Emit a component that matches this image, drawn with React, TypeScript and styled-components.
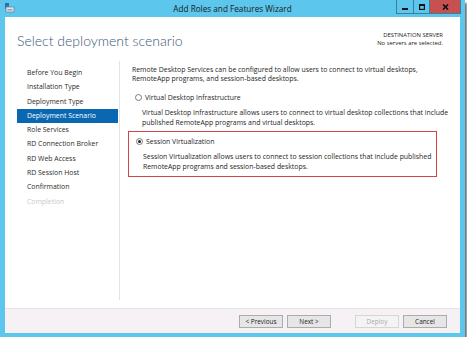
import React from "react";
import styled, { createGlobalStyle } from "styled-components";

const Global = createGlobalStyle`
  html, body { margin: 0; padding: 0; background: #ffffff; }
  body { font-family: "Open Sans", "Noto Sans", sans-serif; }
  * { box-sizing: border-box; }
`;

const Window = styled.div`
  width: 465px;
  height: 337px;
  background: #5cc6ec;
  padding: 0 5px 4px 5px;
  display: flex;
  flex-direction: column;
  box-shadow: 2px 3px 2px rgba(0, 0, 0, 0.55);
`;

const TitleBar = styled.div`
  height: 17px;
  position: relative;
  display: flex;
  align-items: center;
  justify-content: center;
  font-size: 8.2px;
  color: #1a1a1a;
`;

const AppIcon = styled.div`
  position: absolute;
  left: 0;
  top: 3px;
  width: 10px;
  height: 10px;
`;

const Controls = styled.div`
  position: absolute;
  right: -1px;
  top: 0;
  display: flex;
  height: 14px;
  border: 1px solid #3a7f9c;
  border-top: none;
`;

const Ctrl = styled.div<{ $w: number; $red?: boolean }>`
  width: ${(p) => p.$w}px;
  height: 100%;
  display: flex;
  align-items: center;
  justify-content: center;
  background: ${(p) => (p.$red ? "#c75050" : "#5cc6ec")};
  border-left: 1px solid #3a7f9c;
  &:first-child { border-left: none; }
`;

const Body = styled.div`
  flex: 1;
  background: #ffffff;
  display: flex;
  flex-direction: column;
`;

const Header = styled.div`
  height: 44px;
  display: flex;
  align-items: flex-start;
  justify-content: space-between;
  padding: 14px 17px 0 12px;
`;

const Heading = styled.h1`
  margin: 0;
  font-family: "Lato", "Open Sans", sans-serif;
  font-weight: 300;
  font-size: 14px;
  line-height: 20px;
  color: #3b5775;
`;

const Dest = styled.div`
  text-align: right;
  font-size: 5.9px;
  line-height: 8px;
  color: #222;
`;

const Main = styled.div`
  flex: 1;
  display: flex;
`;

const Nav = styled.ul`
  list-style: none;
  margin: 0;
  padding: 5px 0 0 12px;
  width: 115px;
  border-right: 1px solid #e3e3e3;
  margin-bottom: 8px;
`;

const NavItem = styled.li<{ $active?: boolean; $disabled?: boolean }>`
  height: 14.3px;
  line-height: 14.3px;
  padding-left: 10px;
  width: 101px;
  font-size: 6.9px;
  white-space: nowrap;
  color: ${(p) => (p.$active ? "#ffffff" : p.$disabled ? "#c9c9c9" : "#2a2a2a")};
  background: ${(p) => (p.$active ? "#0a67b1" : "transparent")};
`;

const Content = styled.div`
  flex: 1;
  padding: 4px 0 0 12px;
  font-size: 6.9px;
  color: #1e1e1e;
  white-space: nowrap;
`;

const Para = styled.p`
  margin: 0;
  line-height: 9.4px;
`;

const Option = styled.div<{ $selected?: boolean }>`
  margin: ${(p) => (p.$selected ? "3px 0 0 -4px" : "9px 0 0 0")};
  padding: ${(p) => (p.$selected ? "5px 0 4px 7px" : "0 0 0 3px")};
  border: ${(p) => (p.$selected ? "1px solid #d04646" : "none")};
  width: ${(p) => (p.$selected ? "309px" : "auto")};
`;

const RadioRow = styled.div`
  display: flex;
  align-items: center;
  gap: 3px;
  height: 10px;
`;

const Radio = styled.span<{ $checked?: boolean }>`
  width: 7px;
  height: 7px;
  border-radius: 50%;
  border: 1px solid #7a7a7a;
  background: #fff;
  display: flex;
  align-items: center;
  justify-content: center;
  &::after {
    content: "";
    width: 3px;
    height: 3px;
    border-radius: 50%;
    background: ${(p) => (p.$checked ? "#222" : "transparent")};
  }
`;

const Desc = styled.p`
  margin: 5px 0 0 7px;
  line-height: 10px;
`;

const Footer = styled.div`
  height: 25px;
  background: #f5f1f5;
  border-top: 1px solid #e6e2e6;
  display: flex;
  align-items: center;
  justify-content: flex-end;
  padding-right: 13px;
`;

const Btn = styled.button<{ $gapLeft?: number; $disabled?: boolean }>`
  width: 44px;
  height: 13px;
  margin-left: ${(p) => p.$gapLeft ?? 4}px;
  padding: 0;
  font-family: inherit;
  font-size: 6.4px;
  color: ${(p) => (p.$disabled ? "#aaaaaa" : "#222")};
  background: ${(p) => (p.$disabled ? "#f4f4f4" : "#e6e6e6")};
  border: 1px solid ${(p) => (p.$disabled ? "#d6d6d6" : "#acacac")};
  border-radius: 0;
`;

const navItems = [
  "Before You Begin",
  "Installation Type",
  "Deployment Type",
  "Deployment Scenario",
  "Role Services",
  "RD Connection Broker",
  "RD Web Access",
  "RD Session Host",
  "Confirmation",
  "Completion",
];

export default function App() {
  return (
    <>
      <Global />
      <Window>
        <TitleBar>
          <AppIcon>
            <svg width="10" height="10" viewBox="0 0 10 10">
              <rect x="0" y="0" width="4" height="6" fill="#2f6fb0" />
              <rect x="1" y="4" width="8" height="5" fill="#dfe7ee" stroke="#6d8aa5" strokeWidth="0.8" />
              <rect x="2.5" y="6" width="5" height="1.5" fill="#8aa4bc" />
            </svg>
          </AppIcon>
          Add Roles and Features Wizard
          <Controls>
            <Ctrl $w={16}>
              <svg width="6" height="6" viewBox="0 0 6 6">
                <rect x="0" y="4" width="6" height="2" fill="#111" />
              </svg>
            </Ctrl>
            <Ctrl $w={16}>
              <svg width="6" height="6" viewBox="0 0 6 6">
                <rect x="0.6" y="0.6" width="4.8" height="4.8" fill="none" stroke="#111" strokeWidth="1.2" />
                <rect x="0" y="0" width="6" height="2" fill="#111" />
              </svg>
            </Ctrl>
            <Ctrl $w={31} $red>
              <svg width="7" height="6" viewBox="0 0 7 6">
                <path d="M1 0.5 L6 5.5 M6 0.5 L1 5.5" stroke="#111" strokeWidth="1.6" />
              </svg>
            </Ctrl>
          </Controls>
        </TitleBar>
        <Body>
          <Header>
            <Heading>Select deployment scenario</Heading>
            <Dest>
              DESTINATION SERVER
              <br />
              No servers are selected.
            </Dest>
          </Header>
          <Main>
            <Nav>
              {navItems.map((n) => (
                <NavItem
                  key={n}
                  $active={n === "Deployment Scenario"}
                  $disabled={n === "Completion"}
                >
                  {n}
                </NavItem>
              ))}
            </Nav>
            <Content>
              <Para>
                Remote Desktop Services can be configured to allow users to connect to virtual desktops,
                <br />
                RemoteApp programs, and session-based desktops.
              </Para>
              <Option>
                <RadioRow>
                  <Radio />
                  Virtual Desktop Infrastructure
                </RadioRow>
                <Desc>
                  Virtual Desktop Infrastructure allows users to connect to virtual desktop collections that include
                  <br />
                  published RemoteApp programs and virtual desktops.
                </Desc>
              </Option>
              <Option $selected>
                <RadioRow>
                  <Radio $checked />
                  Session Virtualization
                </RadioRow>
                <Desc>
                  Session Virtualization allows users to connect to session collections that include published
                  <br />
                  RemoteApp programs and session-based desktops.
                </Desc>
              </Option>
            </Content>
          </Main>
          <Footer>
            <Btn>&lt; Previous</Btn>
            <Btn>Next &gt;</Btn>
            <Btn $gapLeft={24} $disabled>
              Deploy
            </Btn>
            <Btn>Cancel</Btn>
          </Footer>
        </Body>
      </Window>
    </>
  );
}
